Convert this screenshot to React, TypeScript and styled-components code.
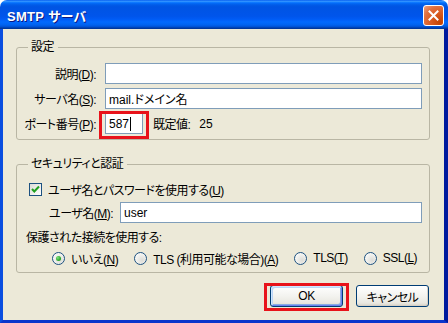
import React from 'react';
import styled, { createGlobalStyle } from 'styled-components';

const uiFont = `"Liberation Sans", "Noto Sans CJK JP", sans-serif`;

const GlobalStyle = createGlobalStyle`
    body {
        margin: 0;
        background: #ffffff;
        overflow: hidden;
    }
`;

const Window = styled.div`
    width: 448px;
    height: 323px;
    display: flex;
    flex-direction: column;
    border-radius: 7px 7px 0 0;
    overflow: hidden;
    font-family: ${uiFont};
    font-size: 12px;
    font-feature-settings: 'palt';
    letter-spacing: -0.5px;
    color: #000000;
`;

const TitleBar = styled.div`
    height: 29px;
    flex: none;
    box-sizing: border-box;
    padding: 2px 4px 0 7px;
    display: flex;
    align-items: center;
    justify-content: space-between;
    background: linear-gradient(
        to bottom,
        #0058ee 0%,
        #3593ff 4%,
        #288eff 6%,
        #127dff 8%,
        #036ffc 10%,
        #0262ee 14%,
        #0057e5 20%,
        #0054e3 24%,
        #0055eb 56%,
        #005bf5 66%,
        #026afe 76%,
        #0062ef 86%,
        #0052d6 92%,
        #0040ab 96%,
        #003092 100%
    );
`;

const Title = styled.span`
    color: #ffffff;
    font-weight: bold;
    font-size: 13px;
    letter-spacing: 0.3px;
    text-shadow: 1px 1px 0 #0a1883;
`;

const CloseButton = styled.div`
    width: 21px;
    height: 21px;
    box-sizing: border-box;
    border: 1px solid #ffffff;
    border-radius: 3px;
    display: flex;
    align-items: center;
    justify-content: center;
    background: radial-gradient(circle at 85% 85%, #c44200 0%, #d95a20 40%, #e2703f 70%, #eea183 100%);
`;

const Body = styled.div`
    flex: 1;
    display: flex;
    flex-direction: column;
    background: #ece9d8;
    border-left: 3px solid #0a4ee0;
    border-right: 4px solid #001a9e;
    border-bottom: 3px solid #0a36cc;
    padding: 11px 14px 0 13px;
`;

const Group = styled.fieldset<{ $gap?: number }>`
    margin: ${({ $gap }) => $gap ?? 0}px 0 0 0;
    min-width: 0;
    border: 1px solid #b9b6a4;
    border-radius: 3px;
    padding: 9px 7px 5px 9px;
    display: flex;
    flex-direction: column;
`;

const Legend = styled.legend`
    margin-left: 2px;
    padding: 0 4px 0 3px;
    line-height: 14px;
`;

const FieldRow = styled.div<{ $top?: number }>`
    display: flex;
    align-items: center;
    height: 21px;
    margin-top: ${({ $top }) => $top ?? 0}px;
`;

const RightLabel = styled.span`
    width: 79px;
    margin-left: -9px;
    margin-right: 9px;
    text-align: right;
    white-space: nowrap;
`;

const Field = styled.div<{ $width?: number }>`
    height: 21px;
    box-sizing: border-box;
    border: 1px solid #7f9db9;
    background: #ffffff;
    padding: 0 3px;
    display: flex;
    align-items: center;
    white-space: nowrap;
    letter-spacing: 0;
    ${({ $width }) => ($width ? `width: ${$width}px; flex: none;` : 'flex: 1;')}
`;

const Caret = styled.span`
    display: inline-block;
    width: 1px;
    height: 14px;
    margin-left: 1px;
    background: #000000;
`;

const Highlight = styled.div<{ $inset: string }>`
    position: relative;
    display: flex;

    &::after {
        content: '';
        position: absolute;
        inset: ${({ $inset }) => $inset};
        border: 3px solid #e8121a;
        pointer-events: none;
    }
`;

const Hint = styled.span`
    margin-left: 10px;
`;

const HintValue = styled.span`
    margin-left: 9px;
    letter-spacing: 0;
`;

const CheckRow = styled.div`
    display: flex;
    align-items: center;
    height: 17px;
    margin-left: 3px;
    gap: 6px;
`;

const CheckBox = styled.span`
    width: 13px;
    height: 13px;
    box-sizing: border-box;
    border: 1px solid #1c5180;
    background: linear-gradient(135deg, #dcdcd7 0%, #ffffff 100%);
    display: flex;
    align-items: center;
    justify-content: center;
`;

const UserLabel = styled.span`
    width: 61px;
    margin-left: 23px;
    margin-right: 10px;
    white-space: nowrap;
`;

const Caption = styled.div`
    margin-top: 7px;
    line-height: 16px;
`;

const RadioRow = styled.div`
    display: flex;
    align-items: center;
    height: 16px;
    margin-top: 4px;
    margin-left: 26px;
    gap: 16px;
`;

const RadioOption = styled.label`
    display: flex;
    align-items: center;
    gap: 6px;
    white-space: nowrap;
`;

const RadioDot = styled.span<{ $checked?: boolean }>`
    width: 13px;
    height: 13px;
    box-sizing: border-box;
    border-radius: 50%;
    border: 1px solid #1c5180;
    background: radial-gradient(circle at 65% 65%, #dcdcd7 0%, #f2f2ee 55%, #ffffff 100%);
    display: flex;
    align-items: center;
    justify-content: center;

    &::after {
        content: '';
        display: ${({ $checked }) => ($checked ? 'block' : 'none')};
        width: 5px;
        height: 5px;
        border-radius: 50%;
        background: radial-gradient(circle at 35% 35%, #7ee27e 0%, #21a121 70%);
    }
`;

const ButtonRow = styled.div`
    display: flex;
    justify-content: flex-end;
    gap: 13px;
    margin-top: 12px;
    padding-right: 1px;
`;

const Button = styled.button<{ $default?: boolean }>`
    width: 73px;
    height: 22px;
    padding: 0;
    border: 1px solid #003c74;
    border-radius: 3px;
    font-family: ${uiFont};
    font-size: 12px;
    font-feature-settings: 'palt';
    letter-spacing: -0.5px;
    color: #000000;
    background: linear-gradient(to bottom, #ffffff 0%, #f3f3ef 50%, #e9e8e1 85%, #d6d0c5 100%);
    box-shadow: ${({ $default }) =>
        $default
            ? 'inset 1px 1px 0 #cee7ff, inset -1px -1px 0 #6982ee, inset 2px 2px 0 #bcd4f6, inset -2px -2px 0 #89ade4'
            : 'inset -1px -1px 0 #d6d0c5'};
`;

const Acc: React.FC<{ k: string }> = ({ k }) => (
    <>
        (<u>{k}</u>)
    </>
);

const App: React.FC = () => (
    <Window>
        <GlobalStyle />
        <TitleBar>
            <Title>SMTP サーバ</Title>
            <CloseButton>
                <svg width="11" height="11" viewBox="0 0 11 11">
                    <path d="M1.5 1.5 L9.5 9.5 M9.5 1.5 L1.5 9.5" stroke="#ffffff" strokeWidth="2" strokeLinecap="square" />
                </svg>
            </CloseButton>
        </TitleBar>
        <Body>
            <Group>
                <Legend>設定</Legend>
                <FieldRow>
                    <RightLabel>
                        説明<Acc k="D" />:
                    </RightLabel>
                    <Field />
                </FieldRow>
                <FieldRow $top={4}>
                    <RightLabel>
                        サーバ名<Acc k="S" />:
                    </RightLabel>
                    <Field>mail.ドメイン名</Field>
                </FieldRow>
                <FieldRow $top={4}>
                    <RightLabel>
                        ポート番号<Acc k="P" />:
                    </RightLabel>
                    <Highlight $inset="-2px -6px -5px -6px">
                        <Field $width={38}>
                            587
                            <Caret />
                        </Field>
                    </Highlight>
                    <Hint>既定値:</Hint>
                    <HintValue>25</HintValue>
                </FieldRow>
            </Group>

            <Group $gap={17} style={{ paddingTop: 10, paddingBottom: 6 }}>
                <Legend>セキュリティと認証</Legend>
                <CheckRow>
                    <CheckBox>
                        <svg width="9" height="9" viewBox="0 0 9 9">
                            <path d="M1 4 L3.3 6.5 L8 1.5" fill="none" stroke="#21a121" strokeWidth="2" />
                        </svg>
                    </CheckBox>
                    <span>
                        ユーザ名とパスワードを使用する<Acc k="U" />
                    </span>
                </CheckRow>
                <FieldRow $top={4}>
                    <UserLabel>
                        ユーザ名<Acc k="M" />:
                    </UserLabel>
                    <Field>user</Field>
                </FieldRow>
                <Caption>保護された接続を使用する:</Caption>
                <RadioRow>
                    <RadioOption>
                        <RadioDot $checked />
                        <span>
                            いいえ<Acc k="N" />
                        </span>
                    </RadioOption>
                    <RadioOption>
                        <RadioDot />
                        <span>
                            TLS (利用可能な場合)<Acc k="A" />
                        </span>
                    </RadioOption>
                    <RadioOption>
                        <RadioDot />
                        <span>
                            TLS<Acc k="T" />
                        </span>
                    </RadioOption>
                    <RadioOption>
                        <RadioDot />
                        <span>
                            SSL<Acc k="L" />
                        </span>
                    </RadioOption>
                </RadioRow>
            </Group>

            <ButtonRow>
                <Highlight $inset="-2px -6px -4px -6px">
                    <Button $default>OK</Button>
                </Highlight>
                <Button>キャンセル</Button>
            </ButtonRow>
        </Body>
    </Window>
);

export default App;
